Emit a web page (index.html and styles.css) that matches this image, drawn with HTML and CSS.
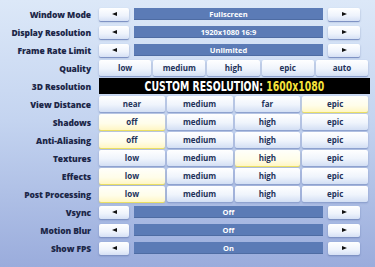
FILE: index.html
```html
<!DOCTYPE html>
<html>
<head>
	<title>Video Settings</title>
	<link rel="stylesheet" href="styles.css">
</head>
<body>
	<div class="settings">
		<div class="row">
			<span class="label">Window Mode</span>
			<div class="cycle">
				<div class="arrow left"></div>
				<div class="value">Fullscreen</div>
				<div class="arrow right"></div>
			</div>
		</div>
		<div class="row">
			<span class="label">Display Resolution</span>
			<div class="cycle">
				<div class="arrow left"></div>
				<div class="value">1920x1080 16:9</div>
				<div class="arrow right"></div>
			</div>
		</div>
		<div class="row">
			<span class="label">Frame Rate Limit</span>
			<div class="cycle">
				<div class="arrow left"></div>
				<div class="value">Unlimited</div>
				<div class="arrow right"></div>
			</div>
		</div>
		<div class="row">
			<span class="label">Quality</span>
			<div class="options five">
				<div class="opt">low</div>
				<div class="opt">medium</div>
				<div class="opt">high</div>
				<div class="opt">epic</div>
				<div class="opt">auto</div>
			</div>
		</div>
		<div class="row">
			<span class="label">3D Resolution</span>
			<div class="custom"><span class="custom_text">CUSTOM RESOLUTION: <em>1600x1080</em></span></div>
		</div>
		<div class="row">
			<span class="label">View Distance</span>
			<div class="options">
				<div class="opt">near</div>
				<div class="opt">medium</div>
				<div class="opt">far</div>
				<div class="opt active">epic</div>
			</div>
		</div>
		<div class="row">
			<span class="label">Shadows</span>
			<div class="options">
				<div class="opt active">off</div>
				<div class="opt">medium</div>
				<div class="opt">high</div>
				<div class="opt">epic</div>
			</div>
		</div>
		<div class="row">
			<span class="label">Anti-Aliasing</span>
			<div class="options">
				<div class="opt active">off</div>
				<div class="opt">medium</div>
				<div class="opt">high</div>
				<div class="opt">epic</div>
			</div>
		</div>
		<div class="row">
			<span class="label">Textures</span>
			<div class="options">
				<div class="opt">low</div>
				<div class="opt">medium</div>
				<div class="opt active">high</div>
				<div class="opt">epic</div>
			</div>
		</div>
		<div class="row">
			<span class="label">Effects</span>
			<div class="options">
				<div class="opt active">low</div>
				<div class="opt">medium</div>
				<div class="opt">high</div>
				<div class="opt">epic</div>
			</div>
		</div>
		<div class="row">
			<span class="label">Post Processing</span>
			<div class="options">
				<div class="opt active">low</div>
				<div class="opt">medium</div>
				<div class="opt">high</div>
				<div class="opt">epic</div>
			</div>
		</div>
		<div class="row">
			<span class="label">Vsync</span>
			<div class="cycle">
				<div class="arrow left"></div>
				<div class="value">Off</div>
				<div class="arrow right"></div>
			</div>
		</div>
		<div class="row">
			<span class="label">Motion Blur</span>
			<div class="cycle">
				<div class="arrow left"></div>
				<div class="value">Off</div>
				<div class="arrow right"></div>
			</div>
		</div>
		<div class="row">
			<span class="label">Show FPS</span>
			<div class="cycle">
				<div class="arrow left"></div>
				<div class="value">On</div>
				<div class="arrow right"></div>
			</div>
		</div>
	</div>
</body>
</html>
```

FILE: styles.css
```css
html, body{
	margin: 0;
	height: 100%;
}
body{
	background: linear-gradient(180deg, #dce8f8 0%, #c4d4f0 45%, #9aacdc 100%);
	font-family: "Open Sans", "DejaVu Sans", sans-serif;
	font-weight: 700;
	color: #1c2748;
	overflow: hidden;
}
.settings{
	padding: 5px 5px 0 0;
}
.row{
	display: grid;
	grid-template-columns: 91px 271px;
	column-gap: 8px;
	height: 18px;
	align-items: center;
}
.label{
	text-align: right;
	font-size: 8.5px;
	font-weight: 800;
	white-space: nowrap;
	letter-spacing: -0.1px;
}
.cycle{
	display: grid;
	grid-template-columns: 30px 189px 32px;
	column-gap: 5px;
	align-items: center;
}
.arrow{
	height: 13px;
	border-radius: 2px;
	background: linear-gradient(180deg, #ffffff 0%, #eef3fc 60%, #d6e1f5 100%);
	box-shadow: 0 1px 0 #7f93c4, 0 1px 2px rgba(40, 60, 120, 0.35);
	display: flex;
	align-items: center;
	justify-content: center;
}
.arrow::before{
	content: "";
	border-top: 2.5px solid transparent;
	border-bottom: 2.5px solid transparent;
}
.arrow.left::before{
	border-right: 5px solid #111;
}
.arrow.right::before{
	border-left: 5px solid #111;
}
.value{
	height: 12px;
	background: #5b7bb6;
	color: #fff;
	font-size: 7.5px;
	line-height: 12px;
	text-align: center;
	box-shadow: inset 0 -1px 0 #4e6ca3;
}
.options{
	display: grid;
	grid-template-columns: repeat(4, 1fr);
	column-gap: 2px;
	width: 269px;
}
.options.five{
	grid-template-columns: repeat(5, 1fr);
}
.opt{
	height: 16px;
	line-height: 16px;
	text-align: center;
	font-size: 8px;
	color: #23325a;
	border-radius: 2px;
	background: linear-gradient(180deg, #ffffff 0%, #eff4fc 55%, #d3dff4 100%);
	box-shadow: 0 1px 0 #8ea2cf, 0 1px 2px rgba(40, 60, 120, 0.3);
}
.opt.active{
	background: linear-gradient(180deg, #fffffb 0%, #fffde9 60%, #fff6c4 100%);
	box-shadow: 0 1px 0 #eadf63, 0 1px 2px rgba(120, 110, 40, 0.3);
}
.custom{
	height: 16px;
	background: #000;
	display: flex;
	align-items: center;
	justify-content: center;
	overflow: hidden;
}
.custom_text{
	display: inline-block;
	color: #fff;
	font-family: "DejaVu Sans Condensed", "DejaVu Sans", sans-serif;
	font-stretch: condensed;
	font-weight: 700;
	font-size: 14px;
	line-height: 16px;
	white-space: nowrap;
	transform: scaleX(0.74);
}
.custom_text em{
	font-style: normal;
	color: #f6e23a;
}
```
